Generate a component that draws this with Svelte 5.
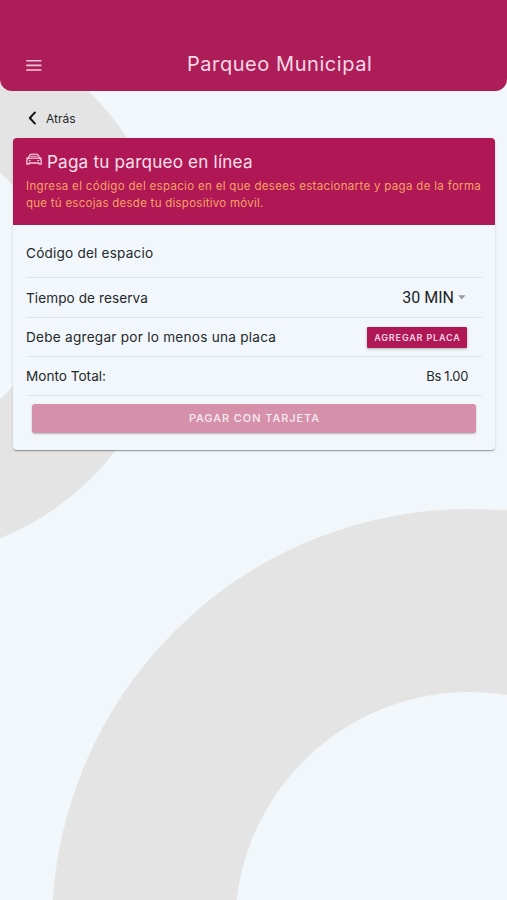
<script>
  const rings = [
    { cx: -100.7, cy: 286, r: 211.6, width: 120 },
    { cx: 470, cy: 927, r: 326.5, width: 183 }
  ];
  let minutes = $state(30);
</script>

<div class="page">
  <svg class="backdrop" viewBox="0 0 507 900" aria-hidden="true">
    {#each rings as ring}
      <circle cx={ring.cx} cy={ring.cy} r={ring.r} stroke-width={ring.width} fill="none" stroke="#e4e4e4" />
    {/each}
  </svg>

  <header class="toolbar">
    <button class="menu" aria-label="Menú">
      <svg width="16" height="13" viewBox="0 0 16 13">
        <path d="M.8 1.8h14M.8 6.4h14M.8 11h14" stroke="#f9c6da" stroke-width="1.6" stroke-linecap="round" />
      </svg>
    </button>
    <h1><span class="t-title">Parqueo Municipal</span></h1>
  </header>

  <main>
    <button class="back">
      <svg width="9" height="14" viewBox="0 0 9 14" fill="none">
        <path d="M7 1.4 1.8 7 7 12.6" stroke="#111" stroke-width="1.9" stroke-linecap="round" stroke-linejoin="round" />
      </svg>
      <span class="t-back">Atrás</span>
    </button>

    <section class="card">
      <div class="intro">
        <h2>
          <svg width="16" height="13" viewBox="0 0 16 13" fill="none" stroke="#f8c6da" stroke-width="1.3" stroke-linejoin="round" stroke-linecap="round">
            <path d="M2.2 5.4 3.6 2.4Q4.1 1.5 5 1.3Q8 .8 11 1.3Q11.9 1.5 12.4 2.4L13.8 5.4" />
            <path d="M4.8 3.4Q8 2.9 11.2 3.4" stroke-width=".9" />
            <path d="M2.2 5.4Q8 4.7 13.8 5.4Q15.3 6.4 15.2 8V11.2H13V10H3V11.2H.8V8Q.7 6.4 2.2 5.4Z" />
            <path d="M.7 5H1.2M14.8 5H15.3" />
            <path d="M3.3 7.6H4.3M11.7 7.6H12.7" stroke-width="1.3" />
          </svg>
          <span class="t-heading">Paga tu parqueo en línea</span>
        </h2>
        <p>
          <span class="line t-line1">Ingresa el código del espacio en el que desees estacionarte y paga de la forma</span>
          <span class="line t-line2">que tú escojas desde tu dispositivo móvil.</span>
        </p>
      </div>

      <div class="row first"><span class="t-code">Código del espacio</span></div>
      <div class="row time">
        <span class="t-time">Tiempo de reserva</span>
        <button class="select">
          {minutes} MIN
          <svg width="8" height="5" viewBox="0 0 8 5"><path d="M0 .3h7.6L3.8 4.6z" fill="#9b9fa2" /></svg>
        </button>
      </div>
      <div class="row plate">
        <span class="t-plate">Debe agregar por lo menos una placa</span>
        <button class="add"><span class="t-add">AGREGAR PLACA</span></button>
      </div>
      <div class="row total">
        <span class="t-total">Monto Total:</span>
        <span class="amount"><span class="t-amount">Bs 1.00</span></span>
      </div>
      <button class="pay" disabled><span class="t-pay">PAGAR CON TARJETA</span></button>
    </section>
  </main>
</div>

<style>
  :global(body) { margin: 0; background: #f1f7fa; }
  .page {
    position: relative;
    width: 507px;
    height: 900px;
    overflow: hidden;
    background: #f1f7fa;
    color: #25282b;
    font-family: Inter, "Open Sans", sans-serif;
  }
  .backdrop { position: absolute; inset: 0; width: 507px; height: 900px; }
  button { border: 0; padding: 0; margin: 0; background: none; color: inherit; font: inherit; }
  svg { display: block; flex: none; }
  span { white-space: nowrap; }
  .t-title { letter-spacing: .56px; }
  .t-heading { letter-spacing: .2px; }
  .t-line1 { letter-spacing: .32px; }
  .t-line2 { letter-spacing: .26px; }
  .t-code { letter-spacing: .2px; }
  .t-time { letter-spacing: .07px; }
  .t-plate { letter-spacing: .25px; }
  .t-total { letter-spacing: 0; }
  .t-amount { letter-spacing: -.35px; }
  .t-add { letter-spacing: 1px; margin-right: -1px; }
  .t-pay { letter-spacing: .93px; margin-right: -.9px; }
  .toolbar {
    position: relative;
    box-sizing: border-box;
    height: 90.5px;
    padding: 40px 26px 0;
    display: flex;
    align-items: flex-start;
    background: #ad1d57;
    border-radius: 0 0 12px 12px;
    color: #fbd9e7;
  }
  .menu { margin-top: 19px; width: 16px; height: 13px; }
  h1 { margin: 8px 0 0 145px; font-size: 20px; line-height: 33px; font-weight: 400; }
  main { position: relative; padding: 16.5px 12px 0 13px; }
  .back {
    display: flex;
    align-items: center;
    gap: 9px;
    height: 22px;
    margin: 0 0 9px 15px;
    font-size: 12px;
  }
  .card {
    height: 312px;
    border-radius: 4px;
    background: #f1f7fa;
    box-shadow: 0 2px 1px -1px rgba(0, 0, 0, .2), 0 1px 1px rgba(0, 0, 0, .14), 0 1px 3px rgba(0, 0, 0, .12);
  }
  .intro {
    box-sizing: border-box;
    height: 87px;
    padding: 11px 13px 0;
    border-radius: 4px 4px 0 0;
    background: #b01855;
    color: #f7a165;
  }
  h2 { display: flex; align-items: center; gap: 5px; margin: 0; height: 25px; font-size: 17.1px; font-weight: 400; color: #ffe0ec; }
  h2 svg { margin-bottom: 4px; }
  p { margin: 4px 0 0; font-size: 11.5px; line-height: 17px; }
  .line { display: block; }
  .row {
    box-sizing: border-box;
    display: flex;
    align-items: center;
    justify-content: space-between;
    height: 39px;
    margin: 0 13px;
    border-bottom: 1px solid #dfe4e7;
    font-size: 13.6px;
  }
  .first { height: 53px; padding-top: 4px; }
  .time { height: 40px; }
  .select { display: flex; align-items: center; gap: 4px; margin-right: 16px; font-family: Roboto, sans-serif; font-size: 16px; color: #202326; }
  .add {
    width: 100px;
    height: 21px;
    margin-right: 15px;
    border-radius: 1px;
    background: #b01855;
    color: #fbd3e3;
    font-size: 9px;
    font-weight: 600;
    box-shadow: 0 1px 3px rgba(0, 0, 0, .3);
  }
  .add .t-add { letter-spacing: .85px; }
  .amount { margin-right: 14px; font-size: 13px; }
  .pay {
    display: block;
    width: 444px;
    height: 29px;
    margin: 8px 0 0 19px;
    padding-bottom: 2px;
    border-radius: 3px;
    background: #d590aa;
    color: #faeaf1;
    font-size: 11px;
    font-weight: 500;
    box-shadow: 0 1px 2px rgba(0, 0, 0, .25);
  }
</style>
